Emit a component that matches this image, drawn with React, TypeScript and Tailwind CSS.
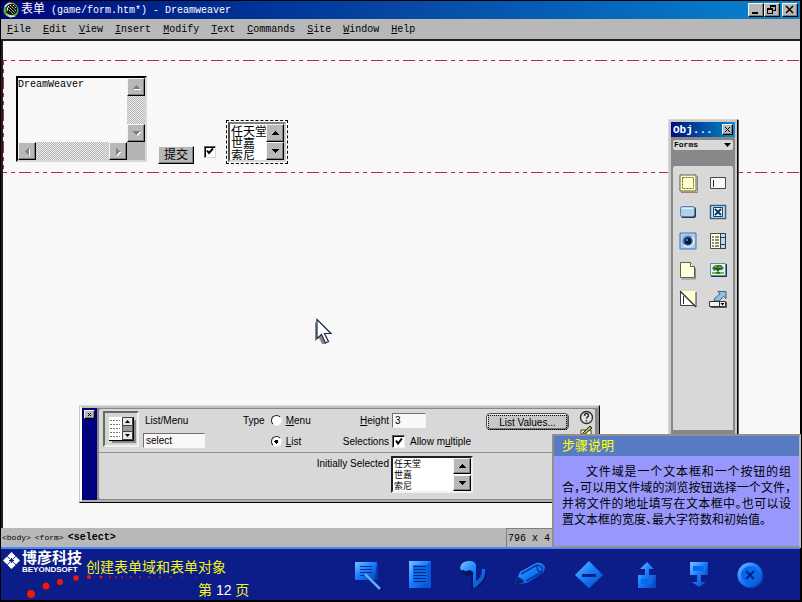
import { ReactNode } from "react";

const mono = "font-['Liberation_Mono','Noto_Sans_CJK_SC',monospace]";
const sans = "font-['Liberation_Sans','Noto_Sans_CJK_SC',sans-serif]";
const raised =
  "border border-t-[#f4f4f4] border-l-[#f4f4f4] border-r-black border-b-black bg-[#b8b8b8] shadow-[inset_-1px_-1px_0_#808080]";
const sunken =
  "border border-t-[#707070] border-l-[#707070] border-r-[#f4f4f4] border-b-[#f4f4f4] bg-[#f8f8f8]";
const dither =
  "bg-[repeating-conic-gradient(#b4b4b4_0_25%,#ececec_0_50%)] bg-[length:2px_2px]";

const menus = [
  "File",
  "Edit",
  "View",
  "Insert",
  "Modify",
  "Text",
  "Commands",
  "Site",
  "Window",
  "Help",
];

const makers = ["任天堂", "世嘉", "索尼"];

const arrows = {
  up: "M0 4h7L3.5 0z",
  down: "M0 0h7L3.5 4z",
  left: "M4 0v7L0 3.5z",
  right: "M0 0v7l4-3.5z",
};

function ScrollButton({
  dir,
  disabled,
  className,
}: {
  dir: keyof typeof arrows;
  disabled?: boolean;
  className: string;
}) {
  return (
    <button
      type="button"
      aria-label={"Scroll " + dir}
      className={`flex shrink-0 items-center justify-center ${raised} ${className}`}
    >
      <svg
        width={dir === "up" || dir === "down" ? 7 : 4}
        height={dir === "up" || dir === "down" ? 4 : 7}
        className="overflow-visible"
        shapeRendering="crispEdges"
      >
        {disabled && (
          <path d={arrows[dir]} fill="#fff" transform="translate(1 1)" />
        )}
        <path d={arrows[dir]} fill={disabled ? "#808080" : "#000"} />
      </svg>
    </button>
  );
}

function TitleBar() {
  return (
    <header className="flex h-[18px] items-center bg-linear-to-r from-[#00007c] via-[#0848a4] to-[#0884d0] pr-0.5 pl-0.5">
      <svg width="16" height="16" viewBox="0 0 16 16">
        <circle cx="8" cy="8" r="7.6" fill="#58a848" />
        <path d="M1 5a8 8 0 0 1 5-4.600l4 1-5 3zM3 12l4 3.500 6-1-5-2z" fill="#c8e8b8" />
        <circle cx="8.500" cy="7.500" r="5.800" fill="#101810" />
        <path
          d="M5 4l7 7M7 3l6 6M4 6l7 7M10 3l3 3"
          stroke="#e8f0e8"
          strokeWidth="1"
          strokeDasharray="1.500 1"
        />
        <path d="M4 9q0-3 2-5" stroke="#fff" fill="none" />
      </svg>
      <h1 className={`ml-0.5 grow text-[10px] leading-4 whitespace-pre text-white ${mono}`}>
        <span className="text-[12px]">表单</span>
        {" (game/form.htm*) - Dreamweaver"}
      </h1>
      <div className="flex">
        <button type="button" aria-label="Minimize" className={`h-[14px] w-4 ${raised}`}>
          <svg width="14" height="12" shapeRendering="crispEdges">
            <path d="M3 8h6v2H3z" />
          </svg>
        </button>
        <button type="button" aria-label="Restore" className={`h-[14px] w-4 ${raised}`}>
          <svg width="14" height="12" fill="none" stroke="#000" shapeRendering="crispEdges">
            <path d="M5 1.500h6M5 2.500h6M5.500 1v3M10.500 1v6M8 6.500h3M2 4.500h6M2 5.500h6M2.500 4v6M7.500 4v6M2 9.500h6" />
          </svg>
        </button>
        <button type="button" aria-label="Close" className={`ml-0.5 h-[14px] w-4 ${raised}`}>
          <svg width="14" height="12">
            <path d="M3 2l7 7M10 2l-7 7" stroke="#000" strokeWidth="1.500" />
          </svg>
        </button>
      </div>
    </header>
  );
}

function DashLine() {
  return (
    <div className="h-px bg-[repeating-linear-gradient(90deg,#c02838_0_4px,transparent_4px_8px,#c02838_8px_12px,transparent_12px_16px,#c02838_16px_28px,transparent_28px_32px)]" />
  );
}

function PageForm() {
  return (
    <form
      className="flex flex-col pt-[19px]"
      onSubmit={(e) => e.preventDefault()}
    >
      <DashLine />
      <div className="flex">
        <div className="w-px bg-[repeating-linear-gradient(180deg,#c02838_0_4px,transparent_4px_8px,#c02838_8px_12px,transparent_12px_16px,#c02838_16px_28px,transparent_28px_32px)]" />
        <div className="flex items-end pt-[15px] pb-2 pl-3">
          <div className="mb-0.5 grid w-[131px] grid-cols-[1fr_18px] grid-rows-[1fr_18px] border-2 border-t-black border-l-black border-r-[#d8d8d8] border-b-[#d8d8d8]">
            <textarea
              aria-label="DreamWeaver"
              defaultValue="DreamWeaver"
              className={`h-16 w-full resize-none overflow-hidden bg-[#f8f8f8] pt-px text-[10px] leading-3 text-black outline-none ${mono}`}
            />
            <div className={`flex flex-col justify-between ${dither}`}>
              <ScrollButton dir="up" disabled className="size-[18px]" />
              <ScrollButton dir="down" disabled className="size-[18px]" />
            </div>
            <div className={`flex justify-between ${dither}`}>
              <ScrollButton dir="left" disabled className="size-[18px]" />
              <ScrollButton dir="right" disabled className="size-[18px]" />
            </div>
            <div className="bg-[#b4b4b4]" />
          </div>
          <button
            type="submit"
            className={`ml-[11px] h-[18px] w-9 text-[12px] leading-4 ${sans} ${raised}`}
          >
            提交
          </button>
          <input
            type="checkbox"
            aria-label="提交"
            defaultChecked
            className="peer mb-1.5 ml-[10px] size-3 appearance-none border border-t-[#606060] border-l-[#606060] border-r-[#d8d8d8] border-b-[#d8d8d8] bg-white shadow-[inset_1px_1px_0_#000]"
          />
          <svg
            width="8"
            height="8"
            className="pointer-events-none mb-2 -ml-[10px] hidden peer-checked:block"
          >
            <path d="M1 2.500l2 2.500 4-4.500" stroke="#000" strokeWidth="2" fill="none" />
          </svg>
          <div className="ml-3 border border-dashed border-black p-px">
            <div className="flex w-[58px] border-2 border-t-[#808080] border-l-[#505050] border-r-[#c8c8c8] border-b-[#d8d8d8] bg-white">
              <select
                multiple
                size={3}
                aria-label="select"
                className={`h-9 min-w-0 grow appearance-none overflow-hidden bg-white text-[12px] text-black outline-none ${sans}`}
              >
                {makers.map((m) => (
                  <option key={m} className="flex h-3 min-h-0 items-center p-0 pl-px">
                    {m}
                  </option>
                ))}
              </select>
              <div className="flex flex-col">
                <ScrollButton dir="up" className="h-[18px] w-[18px]" />
                <ScrollButton dir="down" className="h-[18px] w-[18px]" />
              </div>
            </div>
          </div>
        </div>
      </div>
      <DashLine />
    </form>
  );
}

const tools: { name: string; icon: ReactNode }[] = [
  {
    name: "Form",
    icon: (
      <>
        <path d="M2 18.500h16.500V2" stroke="#888" />
        <path d="M1 1h16v16H1z" fill="#ffffd0" stroke="#606040" />
        <path d="M3.500 3.500h11v11h-11z" stroke="#686820" strokeDasharray="2 1" />
      </>
    ),
  },
  {
    name: "Text field",
    icon: (
      <>
        <path d="M1.500 3.500h15v11h-15z" fill="#f8f8f8" stroke="#404850" />
        <path d="M4.500 6v7" stroke="#202830" />
      </>
    ),
  },
  {
    name: "Button",
    icon: (
      <>
        <rect x="2" y="4" width="15" height="11" rx="2" fill="#203850" />
        <rect x="1.500" y="3.500" width="14" height="10" rx="2" fill="#b0d0f0" stroke="#6080a0" />
        <path d="M3 5.500h11" stroke="#e0f0ff" />
      </>
    ),
  },
  {
    name: "Check box",
    icon: (
      <>
        <path d="M1.500 2.500h15v13h-15z" fill="#c8e4fc" stroke="#386080" strokeWidth="1.500" />
        <path d="M4.500 4.500h9v9h-9z" fill="#f0faff" stroke="#184060" />
        <path d="M6 6l6 6M12 6l-6 6" stroke="#103858" strokeWidth="2" />
      </>
    ),
  },
  {
    name: "Radio button",
    icon: (
      <>
        <path d="M1 1h16v16H1z" fill="#a8ccf8" stroke="#4870a0" />
        <circle cx="9" cy="9" r="5.500" fill="#5078b0" />
        <path d="M5 13a5.500 5.500 0 0 0 8-8" stroke="#e8f4ff" strokeWidth="1.500" />
        <circle cx="9" cy="9" r="3.500" fill="#081830" />
        <circle cx="8" cy="8" r="1" fill="#88a0c0" />
      </>
    ),
  },
  {
    name: "List/Menu",
    icon: (
      <>
        <path d="M1.500 1.500h15v15h-15z" fill="#ffffe0" stroke="#505040" />
        <path d="M3 5h2M6 5h4M3 8h2M6 8h4M3 11h2M6 11h4M3 14h2M6 14h4" stroke="#202020" />
        <path d="M11.500 1.500h5v15h-5z" fill="#c0d8f0" stroke="#303840" />
        <path d="M12 5.500h4M12 12.500h4" stroke="#303840" />
      </>
    ),
  },
  {
    name: "File field",
    icon: (
      <>
        <path d="M2.500 18h14V7" stroke="#888" />
        <path d="M1.500 1.500h10l4 4v11h-14z" fill="#ffffd8" stroke="#606050" />
        <path d="M11.500 1.500v4h4" fill="#fff" stroke="#606050" />
      </>
    ),
  },
  {
    name: "Image field",
    icon: (
      <>
        <path d="M2 3h16v13H2z" fill="#183850" />
        <path d="M1.500 2.500h15v12h-15z" fill="#e0f4fc" stroke="#6888a0" />
        <path d="M3 11h12v2H3z" fill="#70b840" />
        <path d="M3 7l2-2 2-1h5l3 3-2 2-2 0-2 1-2-1-2 1z" fill="#388020" />
        <path d="M9 7v5M6 7l3 2 3-2M7 12h4" stroke="#204010" />
        <path d="M6 5.500h2M10 6.500h2" stroke="#80c050" />
      </>
    ),
  },
  {
    name: "Hidden field",
    icon: (
      <>
        <path d="M1.500 2v13.500h15" stroke="#404040" />
        <path d="M2 2v13h13z" fill="#fff" />
        <path d="M2 1h15v15z" fill="#ffffd0" />
        <path d="M17 2v15M4.500 6v8" stroke="#303030" />
        <path d="M1 1l16 16" stroke="#303030" strokeWidth="1.200" />
      </>
    ),
  },
  {
    name: "Jump menu",
    icon: (
      <>
        <path d="M5 11l1-3 5-4-2-2.500h8v7l-2.500-2L10 11z" fill="#90c0e0" stroke="#284860" strokeWidth=".8" />
        <path d="M.5 11.500h16v5h-16z" fill="#f4f4f4" stroke="#303030" />
        <path d="M10.500 12v4" stroke="#303030" />
        <path d="M11.500 13h4l-2 2.500z" fill="#000" />
        <path d="M2 17.500h15.500V12" stroke="#555" />
      </>
    ),
  },
];

function ObjectsPanel() {
  return (
    <aside className="absolute top-[78px] right-[62px] border border-t-[#d8d8d8] border-l-[#d8d8d8] border-r-black border-b-black bg-[#888] shadow-[1px_1px_0_#606060]">
      <div className="border-2 border-[#c8c8c8]">
        <div className="flex h-[15px] w-[64px] items-center justify-between bg-linear-to-r from-[#00087c] to-[#1888c8] pr-0.5 pl-0.5">
          <h2 className={`text-[11px] leading-3 font-bold text-white ${mono}`}>Obj...</h2>
          <button type="button" aria-label="Close" className={`size-[11px] ${raised}`}>
            <svg width="9" height="9">
              <path d="M2 2l5 5M7 2L2 7" stroke="#000" />
            </svg>
          </button>
        </div>
        <div className="px-0.5 pt-[3px]">
          <div className="relative">
            <select
              aria-label="Category"
              className={`block h-[10px] w-full appearance-none rounded-xs bg-[#d8d8d8] pl-px text-[8px] leading-[10px] font-bold text-black ${mono}`}
            >
              <option>Forms</option>
            </select>
            <svg width="7" height="4" className="pointer-events-none absolute top-[3px] right-0.5">
              <path d={arrows.down} />
            </svg>
          </div>
          <div className="mt-4 grid grid-cols-2 justify-items-center rounded-t-xs bg-[#d8d8d8] pt-[3px] pb-[116px]">
            {tools.map((tool) => (
              <button
                type="button"
                key={tool.name}
                aria-label={tool.name}
                className="flex h-[29px] items-center"
              >
                <svg width="19" height="19" fill="none">
                  {tool.icon}
                </svg>
              </button>
            ))}
          </div>
          <div className="h-1" />
        </div>
      </div>
    </aside>
  );
}

function Radio({ label, checked }: { label: string; checked?: boolean }) {
  return (
    <label className="flex h-[21px] items-center">
      <input
        type="radio"
        name="type"
        defaultChecked={checked}
        className="peer size-[11px] appearance-none rounded-full border border-t-[#202020] border-l-[#202020] border-r-[#eee] border-b-[#eee] bg-white checked:bg-[radial-gradient(circle,#000_0_2px,#fff_2px)]"
      />
      <span className="ml-1">
        <u>{label[0]}</u>
        {label.slice(1)}
      </span>
    </label>
  );
}

function Properties() {
  return (
    <section
      className={`absolute top-[364px] left-[76px] flex border border-t-[#e0e0e0] border-l-[#c8c8c8] border-r-black border-b-black bg-[#888] text-[10px] leading-3 text-black ${sans}`}
    >
      <div className="flex border-2 border-t-[#c0c0c0] border-l-white border-r-[#909090] border-b-[#b0b0b0]">
        <div className="w-[15px] bg-[#00007c] pt-0.5 pl-0.5">
          <button
            type="button"
            aria-label="Close"
            className={`flex h-[9px] w-[11px] items-center justify-center ${raised}`}
          >
            <svg width="5" height="5">
              <path d="M1 1l3 3M4 1L1 4" stroke="#000" />
            </svg>
          </button>
        </div>
        <div className="my-px mr-0.5 ml-0.5 w-[496px] rounded-xs bg-[#d8d8d8]">
          <div className="flex border-b border-[#909090] pt-px pl-1">
            <div className="mt-px mb-1 flex size-9 items-center justify-center border-2 border-t-[#686868] border-l-[#686868] border-r-[#f0f0f0] border-b-[#f0f0f0] bg-[#d0d8d0]">
              <svg width="29" height="29" fill="none">
                <path d="M5 5h24v23H5z" fill="#888" />
                <path d="M2 2h24v23H2z" fill="#fff" />
                <path
                  d="M3 5.500h10M3 9.500h10M3 13.500h10M3 17.500h10M3 21.500h10"
                  stroke="#777"
                  strokeDasharray="2 1"
                />
                <path d="M2 25.500h24.500V2" stroke="#000" />
                <path d="M15.500 2.500h10v22h-10z" fill="#999" stroke="#555" />
                <path d="M15.500 2.500h10v8h-10zM15.500 16.500h10v8h-10z" fill="#e8e8e8" stroke="#444" />
                <path d="M18 8h5l-2.500-3zM18 19h5l-2.500 3z" fill="#000" />
              </svg>
            </div>
            <div className="ml-1 w-[62px]">
              <label htmlFor="name" className="flex h-[21px] items-center pl-0.5">
                List/Menu
              </label>
              <input
                id="name"
                defaultValue="select"
                className={`mt-0.5 block h-[15px] w-full px-0.5 ${sunken}`}
              />
            </div>
            <fieldset className="ml-[38px] flex w-[79px] gap-1.5">
              <span className="flex h-[21px] items-center">Type</span>
              <div>
                <Radio label="Menu" />
                <Radio label="List" checked />
              </div>
            </fieldset>
            <div className="flex w-[67px] flex-col items-end">
              <label htmlFor="height" className="flex h-[21px] items-center">
                <span>
                  <u>H</u>eight
                </span>
              </label>
              <span className="flex h-[21px] items-center">Selections</span>
            </div>
            <div className="ml-[3px] grow">
              <div className="flex h-[21px] items-center">
                <input
                  id="height"
                  defaultValue="3"
                  className={`h-[15px] w-[34px] px-0.5 ${sunken}`}
                />
              </div>
              <label className="flex h-[21px] items-center">
                <input
                  type="checkbox"
                  defaultChecked
                  className="peer size-[13px] appearance-none border border-t-[#606060] border-l-[#606060] border-r-[#f0f0f0] border-b-[#f0f0f0] bg-white shadow-[inset_1px_1px_0_#000]"
                />
                <svg
                  width="9"
                  height="8"
                  className="pointer-events-none -ml-[10px] invisible peer-checked:visible"
                >
                  <path d="M1 2.500l2 3 4-5" stroke="#000" strokeWidth="2" fill="none" />
                </svg>
                <span className="ml-1.5">
                  Allow m<u>u</u>ltiple
                </span>
              </label>
            </div>
            <button
              type="button"
              className="mt-[3px] mr-2.5 h-[17px] w-[83px] rounded-sm border border-[#505050] bg-[#c8c8c8] p-px shadow-[inset_-1px_-1px_0_#777,inset_1px_1px_0_#eee]"
            >
              <span className="block border border-dotted border-black leading-[13px]">
                List Values...
              </span>
            </button>
            <div className="w-4">
              <svg width="15" height="15" fill="none" stroke="#303030">
                <circle cx="7.500" cy="7.500" r="6" fill="#e4e4e4" strokeWidth="1.400" />
                <path d="M5.500 6q0-2.500 2-2.500T9.500 5.500q0 1-1 1.500t-1 1.700M7.500 10v1.500" strokeWidth="1.400" />
              </svg>
              <svg width="15" height="14" fill="none">
                <path d="M2 5h10v7H2z" fill="#f8f8c8" stroke="#404020" />
                <path d="M4 8l7-7 2 2-7 6-3 1z" fill="#a8c060" stroke="#202010" />
              </svg>
            </div>
          </div>
          <div className="flex pt-[3px] pb-1.5 pl-[223px]">
            <label
              htmlFor="initial"
              className="flex w-[67px] justify-end pt-0.5 whitespace-nowrap"
            >
              Initially Selected
            </label>
            <div className="ml-0.5 flex w-[82px] border-2 border-t-[#202020] border-l-[#202020] border-r-[#f0f0f0] border-b-[#f0f0f0] bg-white">
              <select
                id="initial"
                multiple
                size={3}
                className="h-[33px] min-w-0 grow appearance-none overflow-hidden bg-white text-[9px] text-black outline-none"
              >
                {makers.map((m) => (
                  <option key={m} className="flex h-[11px] min-h-0 items-center p-0 pl-px">
                    {m}
                  </option>
                ))}
              </select>
              <div className="flex flex-col justify-between">
                <ScrollButton dir="up" className="h-4 w-[18px]" />
                <ScrollButton dir="down" className="h-4 w-[18px]" />
              </div>
            </div>
          </div>
        </div>
      </div>
    </section>
  );
}

function StepNote() {
  return (
    <div
      className={`absolute right-px bottom-[54px] w-[249px] border-2 border-t-[#909090] border-l-[#909090] border-r-[#b8b8b8] border-b-[#909090] bg-[#9898fc] text-black ${sans}`}
    >
      <h2 className="bg-[#587cc4] px-2 text-[13px] leading-5 text-[#ffff00]">步骤说明</h2>
      <p className="px-2 pt-2 pb-[18px] text-justify indent-6 text-[12px] leading-4 [font-feature-settings:'halt']">
        文件域是一个文本框和一个按钮的组合，可以用文件域的浏览按钮选择一个文件，并将文件的地址填写在文本框中。也可以设置文本框的宽度、最大字符数和初始值。
      </p>
    </div>
  );
}

const nav: { name: string; width: number; icon: ReactNode }[] = [
  {
    name: "Notes",
    width: 28,
    icon: (
      <>
        <path d="M3 6h21v16H3z" fill="#0838a8" />
        <path d="M1 4h22l-2 18H1z" fill="url(#face)" />
        <path d="M6 8.500h12M6 11.500h12M6 14.500h12M6 17.500h8" stroke="#083088" />
        <path d="M12 17l16 16" stroke="#041860" strokeWidth="3" />
        <path d="M11 16l15 15" stroke="#58b0ff" strokeWidth="2.500" />
      </>
    ),
  },
  {
    name: "Contents",
    width: 24,
    icon: (
      <>
        <path d="M1 3h22v27H1z" fill="#0858d8" />
        <path d="M1 3h22l-4 4v18l-4 5H1z" fill="url(#face)" />
        <path d="M5 7h14v18H5z" fill="#0868f0" />
        <path d="M6 8.500h12M6 11.500h12M6 14.500h12M6 17.500h12M6 20.500h12M6 23.500h12" stroke="#082878" />
      </>
    ),
  },
  {
    name: "Return",
    width: 30,
    icon: (
      <>
        <path d="M3 11q2 5 8 5l4-2v15q10-1 12-14" stroke="#041458" strokeWidth="3" />
        <path
          d="M2 10Q3 3 11 3q7 0 7 5v15q6-3 6-12h3q1 11-6 15-2 4-6 4V14q-4-4-7 0-5 0-6-4z"
          fill="url(#face)"
        />
        <path d="M4 13q4 3 9 1" stroke="#061858" strokeWidth="3" />
      </>
    ),
  },
  {
    name: "Write",
    width: 32,
    icon: (
      <>
        <path d="M1 26l5-12L22 5q6-1 9 4l-1 5-17 11z" fill="url(#face)" />
        <path d="M1 27l3-8q5 2 6 5z" fill="#062070" />
        <path d="M7 16L23 7M12 23l16-9" stroke="#0838a8" strokeWidth="2" />
        <path d="M23 7q-1 7 5 7 2-6-5-7z" stroke="#0838a0" strokeWidth="1.500" />
      </>
    ),
  },
  {
    name: "Stop",
    width: 34,
    icon: (
      <>
        <path d="M17 4l14 13.500L17 31 5 19z" fill="#0838b0" />
        <path d="M17 3l14 14-14 13L3 17z" fill="url(#face)" />
        <path d="M10 16h14v3H10z" fill="#082080" />
      </>
    ),
  },
  {
    name: "Previous",
    width: 30,
    icon: (
      <>
        <path d="M6 17h18v13H6z" fill="#0848c8" />
        <path d="M15 4l7 7h-5v6h7l-3 13H6V17h7v-6H8z" fill="url(#face)" />
        <path d="M9 21h11v5H9z" fill="#0868f0" />
      </>
    ),
  },
  {
    name: "Next",
    width: 22,
    icon: (
      <>
        <path d="M2 4h18v13H2z" fill="#0858d8" />
        <path d="M2 4h18l-3 13h-4v7h5l-7 5-7-5h5v-7H2z" fill="url(#face)" />
        <path d="M5 8h11v5H5z" fill="#0868f0" />
      </>
    ),
  },
  {
    name: "Exit",
    width: 28,
    icon: (
      <>
        <circle cx="15" cy="18" r="12.500" fill="#0838b0" />
        <circle cx="14" cy="17" r="12.500" fill="url(#face)" />
        <circle cx="14" cy="17" r="9" fill="#0868f0" />
        <path d="M10 13l8 8M18 13l-8 8" stroke="#082080" strokeWidth="2" />
      </>
    ),
  },
];

// x, y, radius
const dots = [
  [30, 45, 4],
  [45, 37, 3.5],
  [59, 33, 3],
  [75, 29, 2.7],
  [88, 28, 2],
  [100, 28, 1.5],
  [109, 28, 1],
  [115, 28, 1],
  [121, 28, 1],
  [130, 28, 1],
  [139, 28, 1],
  [148, 28, 1],
  [159, 28, 1],
  [170, 28, 1],
  [181, 28, 0.8],
  [196, 28, 0.8],
  [212, 28, 0.7],
  [229, 28, 0.7],
];

function Footer() {
  return (
    <footer className="relative flex justify-between border-t-2 border-[#4888f8] bg-[#0c1c88]">
      <svg width="240" height="52" className="pointer-events-none absolute top-0 left-0">
        {dots.map(([x, y, r]) => (
          <circle key={x} cx={x} cy={y} r={r} fill={r < 1 ? "#a01048" : r < 1.5 ? "#c81028" : "#f01808"} />
        ))}
      </svg>
      <div className={`flex gap-1 pl-0.5 ${sans}`}>
        <a href="#home" className="flex gap-0.5 pt-px text-white">
          <svg width="17" height="19" fill="#fff" className="mt-px">
            <path d="M8.500 1l4 4-4 4-4-4zM8.500 10l4 4-4 4-4-4zM4 5.500l4 4-4 4-4-4zM13 5.500l4 4-4 4-4-4z" />
            <path d="M6 9.500h5M8.500 7v5" stroke="#0c1c88" />
          </svg>
          <span className="w-[60px]">
            <b className="block text-[15px] leading-[15px] font-bold whitespace-nowrap">博彦科技</b>
            <b className="mt-px block text-[8px] leading-[7px] whitespace-nowrap">BEYONDSOFT</b>
          </span>
        </a>
        <div className="pt-2 text-[14px] leading-5 text-[#f4f418]">
          <h2>创建表单域和表单对象</h2>
          <p className="mt-[3px] pl-28">
            第 <span className="text-white">12</span> 页
          </p>
        </div>
      </div>
      <nav className="flex items-start gap-[26px] pt-[9px] pr-9">
        <svg width="0" height="0" className="absolute">
          <linearGradient id="face" x1="0" y1="0" x2="1" y2="1">
            <stop offset="0" stopColor="#78c0ff" />
            <stop offset=".45" stopColor="#1880ff" />
            <stop offset="1" stopColor="#0840b8" />
          </linearGradient>
        </svg>
        {nav.map((item) => (
          <button type="button" key={item.name} aria-label={item.name}>
            <svg width={item.width} height="34" fill="none" className="block">
              {item.icon}
            </svg>
          </button>
        ))}
      </nav>
    </footer>
  );
}

function App() {
  return (
    <div className="relative flex min-h-screen flex-col overflow-hidden bg-black pt-px pr-0.5 pb-0.5 pl-px">
      <TitleBar />
      <nav className={`flex h-5 items-center gap-3 bg-[#b8b8b8] pl-1.5 text-[10px] text-black ${mono}`}>
        {menus.map((m) => (
          <button type="button" key={m}>
            <u>{m[0]}</u>
            {m.slice(1)}
          </button>
        ))}
      </nav>
      <main className="relative grow border-t-2 border-l-2 border-t-[#202020] border-l-[#202020] bg-[#f8f8f8]">
        <PageForm />
        <ObjectsPanel />
        <Properties />
        <svg width="20" height="28" className="absolute top-[277px] left-[310px]">
          <path d="M2 3v20l4-3 3 6h4" fill="#888" />
          <path
            d="M4 1.500v19l4.500-4 4 8.500 3-1.500-4-8H18z"
            fill="#fff"
            stroke="#182850"
            strokeWidth="1.200"
          />
        </svg>
      </main>
      <div className={`flex h-[19px] justify-between bg-[#b8b8b8] pl-px text-[10px] text-black ${mono}`}>
        <div className="flex items-center gap-1">
          <span className="text-[8px]">&lt;body&gt;</span>
          <span className="text-[8px]">&lt;form&gt;</span>
          <b>&lt;select&gt;</b>
        </div>
        <div className="flex w-[294px] items-center border-t border-l border-[#808080] pl-px">
          796 x 4
        </div>
      </div>
      <Footer />
      <StepNote />
    </div>
  );
}

export default App;
